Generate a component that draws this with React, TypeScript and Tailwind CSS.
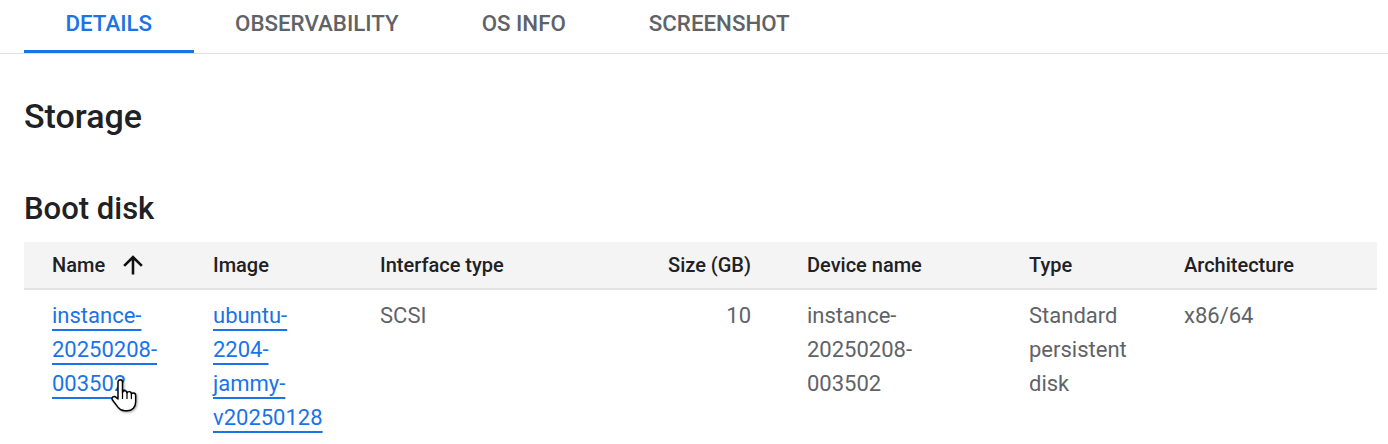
import React from 'react';

const tabs = ['Details', 'Observability', 'OS info', 'Screenshot'];

function ArrowUp() {
  return (
    <svg width="28" height="28" viewBox="0 0 24 24" className="text-[#111]">
      <path fill="currentColor" d="M3.6 12l1.6 1.6L10.9 8v12.2h2.2V8l5.7 5.6 1.6-1.6L12 3.6 3.6 12z" />
    </svg>
  );
}

// Pointer cursor hovering over the first link
function HandCursor() {
  return (
    <svg width="34" height="36" viewBox="0 0 30 32" className="drop-shadow-[1px_1px_1px_rgba(0,0,0,0.35)]">
      <path
        d="M9 2.5c1.2 0 2 .9 2 2v9.2c.3-.9 1.1-1.4 2-1.4 1.1 0 1.9.8 2 1.8.4-.7 1.1-1.1 1.9-1.1 1.1 0 2 .9 2 2 .4-.5 1-.8 1.7-.8 1.2 0 2.1 1 2.1 2.2v5.8c0 4.3-3 7.8-7.4 7.8h-2.4c-2.5 0-4.3-1-5.8-3l-5-6.6c-.7-.9-.5-2.1.4-2.7.9-.6 2-.4 2.7.4L7 19.5V4.5c0-1.1.8-2 2-2z"
        fill="#fff"
        stroke="#000"
        strokeWidth="1.3"
        strokeLinejoin="round"
      />
      <path d="M11 13.7v5.3M15 14.1v5M18.9 15.3v3.9" stroke="#000" strokeWidth="1.1" strokeLinecap="round" />
    </svg>
  );
}

function Link({ children }: { children: React.ReactNode }) {
  return (
    <a href="#" className="text-[#1a73e8] underline decoration-[1.5px] underline-offset-[6px]">
      {children}
    </a>
  );
}

export default function App() {
  return (
    <div className="w-[1388px] h-[444px] overflow-hidden bg-white font-['Roboto','Liberation_Sans',sans-serif] text-[#202124]">
      {/* Tabs */}
      <div className="flex pl-6 border-b border-[#e0e0e0]">
        {tabs.map((t, i) => (
          <div
            key={t}
            className={`px-[41.5px] pt-[9px] pb-[13px] text-[22.3px] leading-[28px] font-medium uppercase border-b-[3px] ${
              i === 0 ? 'text-[#1a73e8] border-[#1a73e8]' : 'text-[#5f6368] border-transparent'
            }`}
          >
            {t}
          </div>
        ))}
      </div>

      <div className="pl-6 pr-[11px]">
        <h2 className="mt-[42px] text-[34px] leading-[40px] font-medium">Storage</h2>
        <h3 className="mt-[53px] text-[31px] leading-[40px] font-medium">Boot disk</h3>

        {/* Boot disk table */}
        <div className="mt-[13px]">
          <div className="grid grid-cols-[161px_167px_260px_111px_278px_155px_1fr] items-center h-[48px] pl-[28px] bg-[#f4f4f4] border-b-2 border-[#e3e3e3] text-[20px] font-medium text-[#202124]">
            <div className="flex items-center gap-[14px]">
              <span>Name</span>
              <ArrowUp />
            </div>
            <div>Image</div>
            <div>Interface type</div>
            <div className="text-right">Size (GB)</div>
            <div className="pl-[56px]">Device name</div>
            <div>Type</div>
            <div>Architecture</div>
          </div>

          <div className="grid grid-cols-[161px_167px_260px_111px_278px_155px_1fr] pl-[28px] pt-[9px] text-[22px] leading-[34px] text-[#5f6368]">
            <div className="relative w-[120px]">
              <Link>instance-20250208-003502</Link>
              <div className="absolute left-[58px] top-[78px]">
                <HandCursor />
              </div>
            </div>
            <div className="w-[118px]">
              <Link>ubuntu-2204-jammy-v20250128</Link>
            </div>
            <div>SCSI</div>
            <div className="text-right">10</div>
            <div className="pl-[56px]">
              <div className="w-[130px]">instance-20250208-003502</div>
            </div>
            <div className="w-[120px]">Standard persistent disk</div>
            <div>x86/64</div>
          </div>
        </div>
      </div>
    </div>
  );
}
